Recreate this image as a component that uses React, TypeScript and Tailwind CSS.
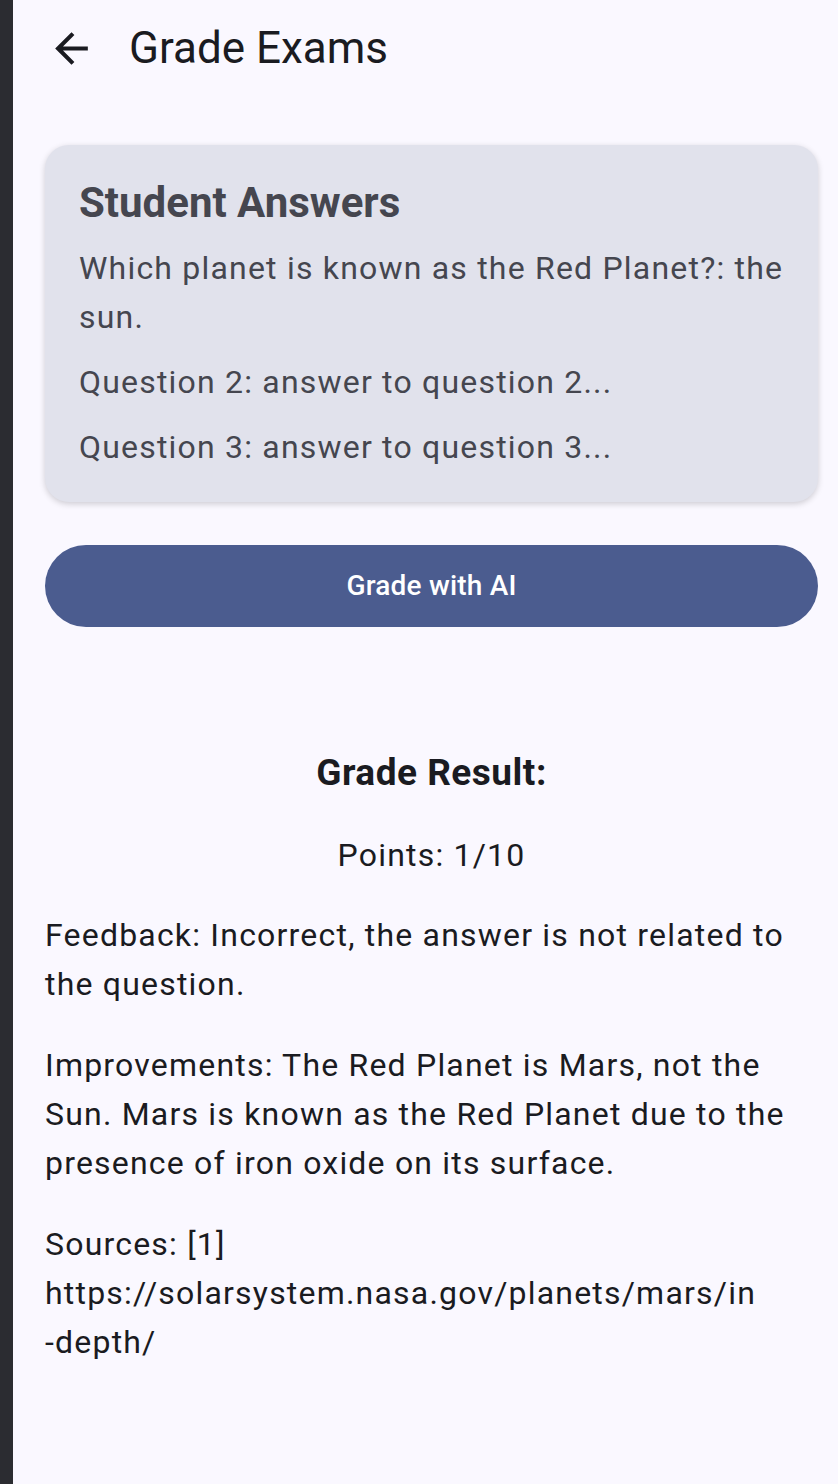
export default function App() {
  return (
    <div
      className="flex min-h-[1484px] w-full bg-[#faf8ff] text-[#1a1b21]"
      style={{ fontFamily: "Roboto, 'Liberation Sans', sans-serif" }}
    >
      {/* left edge strip */}
      <div className="w-[13px] shrink-0 bg-[#2b2c31]" />

      <div className="flex flex-1 flex-col">
        {/* TOP BAR */}
        <div className="flex h-[96px] items-center pl-[34px]">
          <svg
            width="49"
            height="49"
            viewBox="0 0 24 24"
            fill="#1a1b21"
            xmlns="http://www.w3.org/2000/svg"
          >
            <path d="M20 11H7.83l5.59-5.59L12 4l-8 8 8 8 1.41-1.41L7.83 13H20v-2z" />
          </svg>
          <h1 className="ml-[33px] text-[44px] leading-[56px] font-normal">
            Grade Exams
          </h1>
        </div>

        <div className="flex flex-col pl-[32px] pr-[20px]">
          {/* STUDENT ANSWERS CARD */}
          <div className="mt-[49px] rounded-[24px] bg-[#e1e2ec] px-[34px] pt-[30px] pb-[30px] text-[#45464f] shadow-[0_2px_6px_rgba(0,0,0,0.18)]">
            <h2 className="text-[42px] leading-[56px] font-bold">
              Student Answers
            </h2>
            <div className="mt-[13px] flex flex-col gap-[16px] text-[32px] leading-[49px] tracking-[1.2px]">
              <p>Which planet is known as the Red Planet?: the sun.</p>
              <p>Question 2: answer to question 2...</p>
              <p>Question 3: answer to question 3...</p>
            </div>
          </div>

          {/* GRADE BUTTON */}
          <button
            type="button"
            className="mt-[43px] flex h-[82px] w-full items-center justify-center rounded-full bg-[#4b5c8f] text-[28px] font-medium tracking-[0.2px] text-white"
          >
            Grade with AI
          </button>

          {/* RESULT */}
          <h3 className="mt-[121px] text-center text-[37px] leading-[49px] font-bold tracking-[0.5px]">
            Grade Result:
          </h3>
          <p className="mt-[34px] text-center text-[32px] leading-[49px] tracking-[1.2px]">
            Points: 1/10
          </p>
          <div className="mt-[31px] flex flex-col gap-[32px] text-[32px] leading-[49px] tracking-[1.2px]">
            <p>Feedback: Incorrect, the answer is not related to the question.</p>
            <p>
              Improvements: The Red Planet is Mars, not the Sun. Mars is known
              as the Red Planet due to the presence of iron oxide on its
              surface.
            </p>
            <div>
              <p>Sources: [1]</p>
              <p>https://solarsystem.nasa.gov/planets/mars/in</p>
              <p>-depth/</p>
            </div>
          </div>
        </div>
      </div>
    </div>
  );
}
